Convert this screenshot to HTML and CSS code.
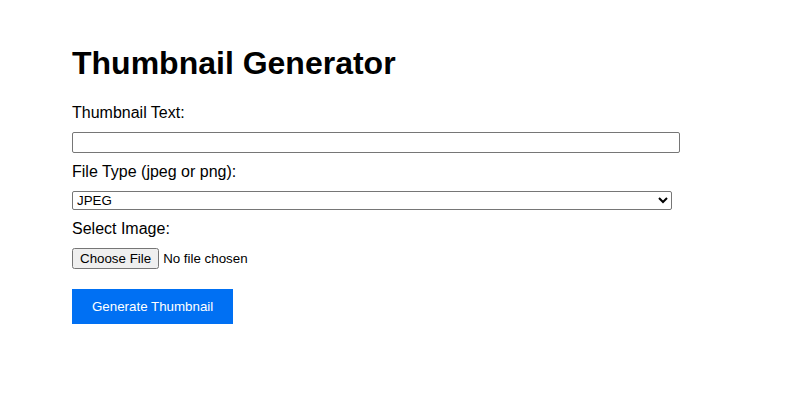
FILE: index.html
```html
<!DOCTYPE html>
<html lang="en">
<head>
<meta charset="utf-8">
<title>Thumbnail Generator</title>
<link rel="stylesheet" href="styles.css">
</head>
<body>
<div class="container">
  <h1 class="title">Thumbnail Generator</h1>
  <form class="form">
    <label class="label" for="text">Thumbnail Text:</label>
    <input class="text-input" type="text" id="text">
    <label class="label" for="type">File Type (jpeg or png):</label>
    <select class="select" id="type">
      <option>JPEG</option>
      <option>PNG</option>
    </select>
    <label class="label" for="image">Select Image:</label>
    <input class="file-input" type="file" id="image">
    <button class="submit" type="button">Generate Thumbnail</button>
  </form>
</div>
</body>
</html>
```

FILE: styles.css
```css
html, body {
  margin: 0;
  padding: 0;
  background: #ffffff;
}

body {
  font-family: "Liberation Sans", Arial, sans-serif;
  color: #000000;
}

.container {
  width: 600px;
  padding: 24px 72px 0 72px;
}

.title {
  font-size: 32px;
  font-weight: bold;
  margin: 21.44px 0;
  line-height: normal;
}

.form {
  display: flex;
  flex-direction: column;
  align-items: flex-start;
}

.label {
  display: block;
  font-size: 16px;
  line-height: normal;
  margin-bottom: 10px;
}

.text-input {
  box-sizing: content-box;
  width: 600px;
  height: 15px;
  font-family: "Liberation Sans", Arial, sans-serif;
  font-size: 13.333px;
  padding: 2px 3px;
  border: 1px solid #767676;
  border-radius: 2px;
  margin: 0 0 10px 0;
}

.select {
  box-sizing: border-box;
  width: 600px;
  height: 19px;
  font-family: "Liberation Sans", Arial, sans-serif;
  font-size: 13.333px;
  margin: 0 0 10px 0;
  border: 1px solid #767676;
  border-radius: 2px;
  background: #ffffff;
  color: #000000;
}

.file-input {
  font-family: "Liberation Sans", Arial, sans-serif;
  font-size: 13.333px;
  margin: 0 0 20px 0;
}

.submit {
  font-family: "Liberation Sans", Arial, sans-serif;
  font-size: 13.333px;
  line-height: normal;
  color: #ffffff;
  background: #0070f3;
  border: none;
  border-radius: 0;
  padding: 10px 20px;
  cursor: pointer;
}
```
